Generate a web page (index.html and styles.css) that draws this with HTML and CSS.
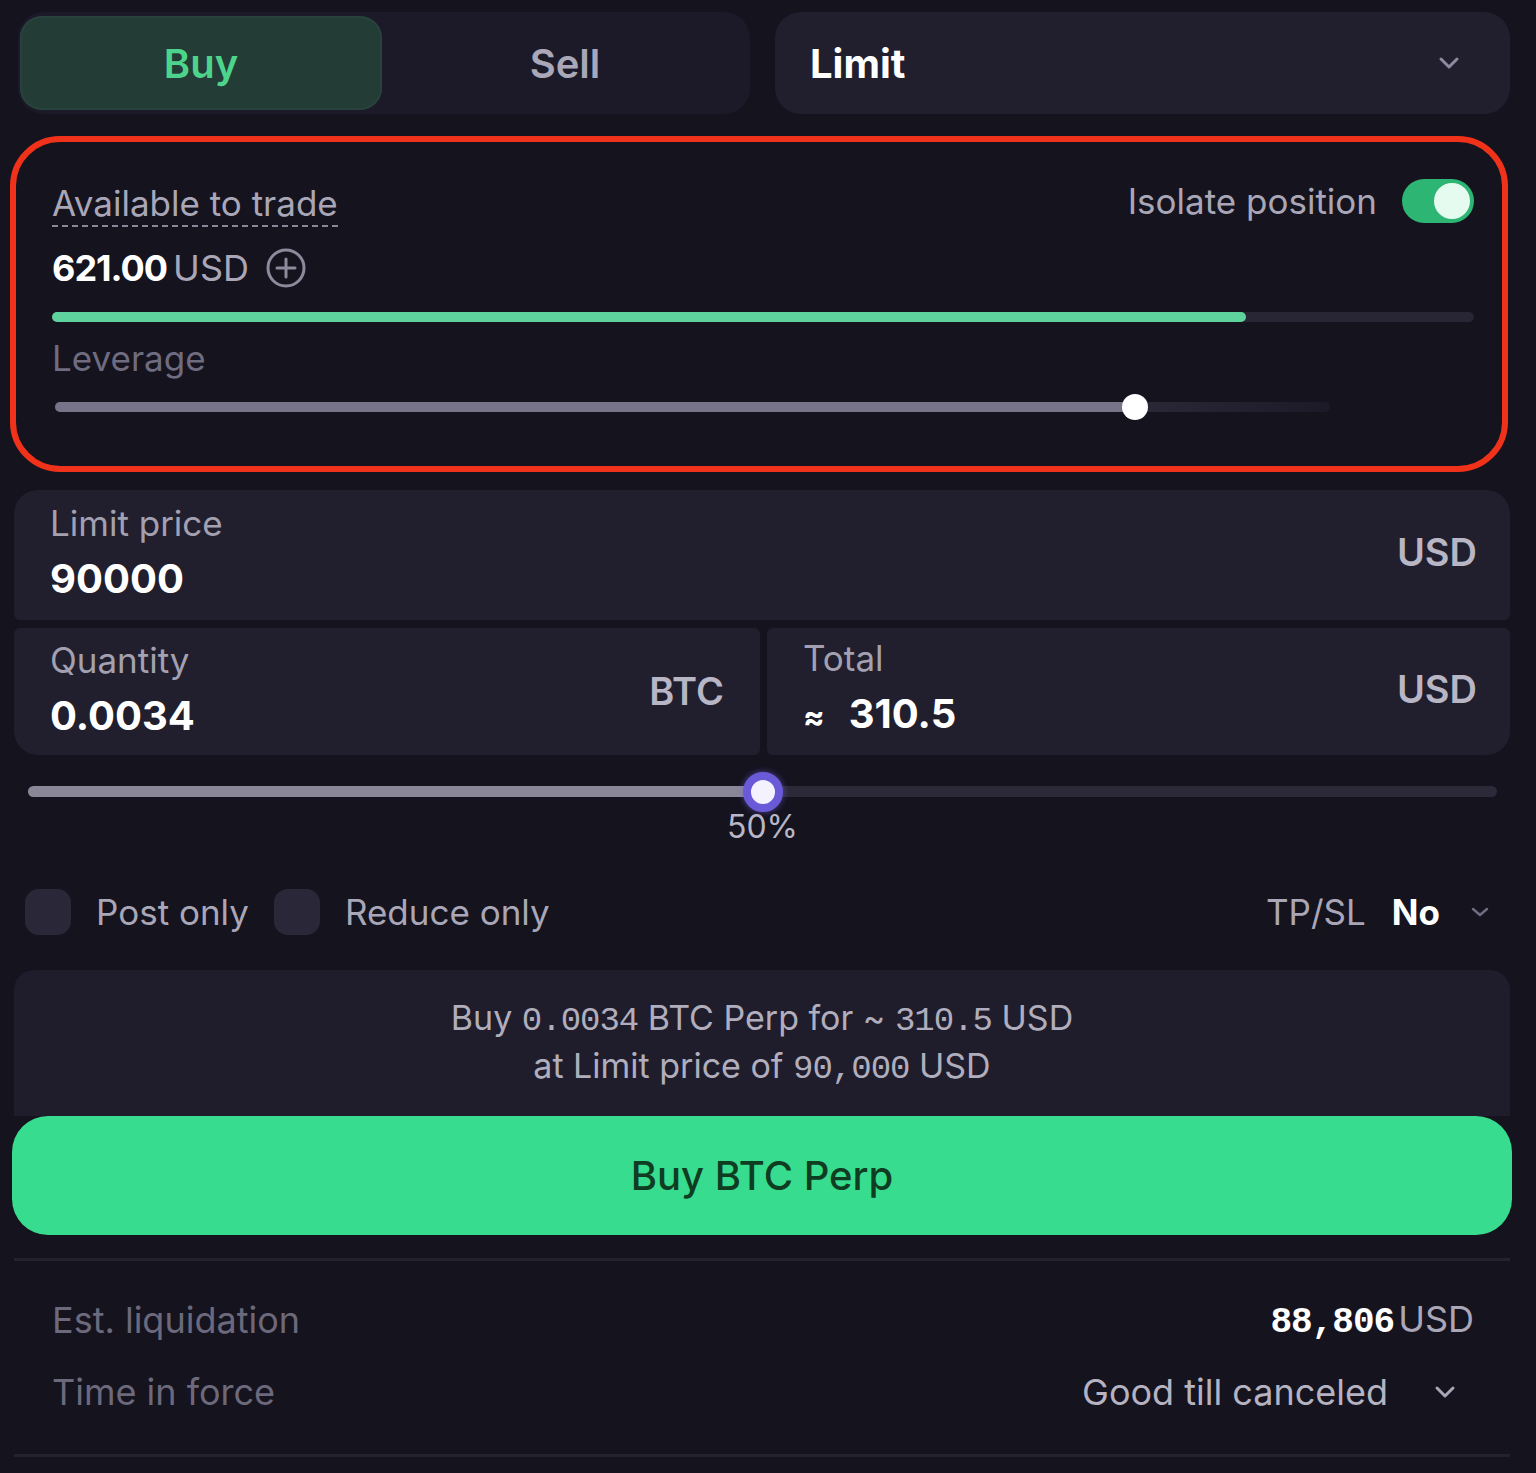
FILE: index.html
```html
<!DOCTYPE html>
<html lang="en">

<head>
    <meta charset="UTF-8">
    <meta name="viewport" content="width=device-width, initial-scale=1.0">
    <title>Buy BTC Perp</title>
    <link rel="stylesheet" href="styles.css">
</head>

<body>
    <main class="panel">
        <div class="top-row">
            <div class="side-switch">
                <button class="side-btn active">Buy</button>
                <button class="side-btn">Sell</button>
            </div>
            <div class="order-type">
                <span>Limit</span>
                <svg class="chevron" width="22" height="14" viewBox="0 0 22 14"><path d="M3 3l8 8 8-8" fill="none" stroke="#8e8ba0" stroke-width="3" stroke-linecap="round" stroke-linejoin="round"/></svg>
            </div>
        </div>

        <section class="account-box">
            <div class="account-head">
                <span class="dotted-label">Available to trade</span>
                <div class="isolate">
                    <span>Isolate position</span>
                    <span class="toggle"><span class="knob"></span></span>
                </div>
            </div>
            <div class="available">
                <strong>621.00</strong><span class="unit">USD</span>
                <svg class="plus-icon" width="42" height="42" viewBox="0 0 42 42"><circle cx="21" cy="21" r="18" fill="none" stroke="#8d8a9c" stroke-width="3"/><path d="M21 12v18M12 21h18" stroke="#8d8a9c" stroke-width="3" stroke-linecap="round"/></svg>
            </div>
            <div class="margin-bar"><div class="margin-fill" style="width: 84%"></div></div>
            <div class="leverage-label">Leverage</div>
            <div class="leverage-slider">
                <div class="leverage-fill" style="width: 84.7%"><span class="leverage-thumb"></span></div>
            </div>
        </section>

        <section class="inputs">
            <div class="field price-field">
                <div class="field-text">
                    <span class="field-label">Limit price</span>
                    <span class="field-value">90000</span>
                </div>
                <span class="field-unit">USD</span>
            </div>
            <div class="field-pair">
                <div class="field qty-field">
                    <div class="field-text">
                        <span class="field-label">Quantity</span>
                        <span class="field-value">0.0034</span>
                    </div>
                    <span class="field-unit">BTC</span>
                </div>
                <div class="field total-field">
                    <div class="field-text">
                        <span class="field-label">Total</span>
                        <span class="field-value"><span class="approx">≈</span>310.5</span>
                    </div>
                    <span class="field-unit">USD</span>
                </div>
            </div>
        </section>

        <div class="size-slider">
            <div class="size-track">
                <div class="size-fill" style="width: 50%"><span class="size-thumb"></span></div>
            </div>
            <div class="size-pct">50%</div>
        </div>

        <div class="options">
            <label class="check"><span class="box"></span>Post only</label>
            <label class="check"><span class="box"></span>Reduce only</label>
            <div class="tpsl">
                <span>TP/SL</span>
                <strong>No</strong>
                <svg width="20" height="12" viewBox="0 0 20 12"><path d="M3 3l7 6 7-6" fill="none" stroke="#6f6c80" stroke-width="2.5" stroke-linecap="round" stroke-linejoin="round"/></svg>
            </div>
        </div>

        <div class="summary">
            <p>Buy <span class="mono">0.0034</span> BTC Perp for ~ <span class="mono">310.5</span> USD</p>
            <p>at Limit price of <span class="mono">90,000</span> USD</p>
        </div>
        <button class="submit">Buy BTC Perp</button>

        <section class="details">
            <div class="detail-row">
                <span class="detail-label">Est. liquidation</span>
                <span class="detail-value"><strong class="mono">88,806</strong><span class="unit">USD</span></span>
            </div>
            <div class="detail-row">
                <span class="detail-label">Time in force</span>
                <span class="detail-value tif">Good till canceled
                    <svg width="26" height="16" viewBox="0 0 26 16"><path d="M5 4l8 8 8-8" fill="none" stroke="#a9a7b7" stroke-width="3" stroke-linecap="round" stroke-linejoin="round"/></svg>
                </span>
            </div>
        </section>
    </main>
</body>

</html>
```

FILE: styles.css
```css
* {
    box-sizing: border-box;
}

html, body {
    margin: 0;
    padding: 0;
    background-color: #15131e;
    font-family: Inter, 'Noto Sans', sans-serif;
    color: #a9a7b7;
}

.panel {
    width: 1500px;
    margin-left: 12px;
    padding-top: 12px;
}

/* top row */
.top-row {
    display: flex;
    gap: 25px;
    height: 102px;
    margin: 0 2px 0 6px;
}

.side-switch {
    width: 732px;
    display: flex;
    padding: 4px 2px;
    background-color: #1c1a28;
    border-radius: 26px;
}

.side-btn {
    flex: 1;
    border: none;
    background: none;
    font-family: inherit;
    font-size: 40px;
    font-weight: 600;
    color: #a9a7b8;
    border-radius: 22px;
}

.side-btn.active {
    flex: 0 0 362px;
    background-color: #233c36;
    color: #4dd48c;
    box-shadow: inset 0 0 0 2px #28423c;
}

.order-type {
    flex: 1;
    display: flex;
    align-items: center;
    justify-content: space-between;
    padding: 0 50px 0 35px;
    background-color: #211f2e;
    border-radius: 26px;
    color: #ffffff;
    font-size: 40px;
    font-weight: 700;
}

/* highlighted account box */
.account-box {
    margin: 22px 4px 0 -2px;
    border: 6px solid #f1321a;
    border-radius: 50px;
    padding: 39px 28px 54px 36px;
}

.account-head {
    display: flex;
    justify-content: space-between;
    align-items: center;
    height: 48px;
}

.dotted-label {
    font-size: 35px;
    line-height: 44px;
    color: #a9a7b7;
    border-bottom: 2px dashed #8a8799;
    align-self: flex-start;
}

.isolate {
    display: flex;
    align-items: center;
    gap: 25px;
    font-size: 35px;
    margin-top: -8px;
}

.toggle {
    width: 72px;
    height: 44px;
    border-radius: 22px;
    background-color: #2db673;
    display: flex;
    justify-content: flex-end;
    align-items: center;
    padding: 4px;
}

.knob {
    width: 36px;
    height: 36px;
    border-radius: 50%;
    background-color: #e6fbef;
}

.available {
    display: flex;
    align-items: center;
    margin-top: 17px;
    height: 44px;
    font-size: 36px;
}

.available strong {
    color: #ffffff;
    font-weight: 700;
    letter-spacing: -1px;
}

.unit {
    margin-left: 6px;
    color: #a9a7b7;
}

.plus-icon {
    margin-left: 16px;
}

.margin-bar {
    margin-top: 22px;
    height: 10px;
    border-radius: 5px;
    background-color: #282634;
}

.margin-fill {
    height: 100%;
    border-radius: 5px;
    background-color: #5fd39d;
}

.leverage-label {
    margin-top: 14px;
    font-size: 35px;
    line-height: 44px;
    color: #6f6c80;
}

.leverage-slider {
    margin: 22px 144px 0 3px;
    height: 10px;
    border-radius: 5px;
    background: linear-gradient(90deg, #2a2837 85%, #1c1a27 100%);
}

.leverage-fill {
    position: relative;
    height: 100%;
    border-radius: 5px;
    background-color: #77748a;
}

.leverage-thumb {
    position: absolute;
    right: -13px;
    top: -8px;
    width: 26px;
    height: 26px;
    border-radius: 50%;
    background-color: #ffffff;
}

/* inputs */
.inputs {
    margin: 18px 2px 0 2px;
}

.field {
    display: flex;
    justify-content: space-between;
    align-items: center;
    background-color: #211f2e;
    padding: 11px 33px 17px 36px;
}

.price-field {
    border-radius: 24px 24px 6px 6px;
    height: 130px;
}

.field-pair {
    display: flex;
    gap: 7px;
    margin-top: 8px;
}

.field-pair .field {
    flex: 1;
    height: 127px;
}

.qty-field {
    border-radius: 6px 6px 6px 24px;
    padding-right: 36px;
}

.total-field {
    border-radius: 6px 6px 24px 6px;
}

.field-text {
    display: flex;
    flex-direction: column;
    gap: 10px;
}

.field-label {
    font-size: 35px;
    line-height: 44px;
    color: #a3a1b1;
}

.field-value {
    font-size: 40px;
    line-height: 48px;
    font-weight: 700;
    color: #ffffff;
}

.approx {
    font-size: 32px;
    margin-right: 24px;
}

.field-unit {
    font-size: 38px;
    font-weight: 600;
    color: #b8b6c5;
    margin-top: 4px;
}

.total-field .field-unit,
.price-field .field-unit {
    margin-top: 0;
}

/* size slider */
.size-slider {
    margin: 31px 15px 0 16px;
}

.size-track {
    height: 11px;
    border-radius: 6px;
    background-color: #2c2a39;
}

.size-fill {
    position: relative;
    height: 100%;
    border-radius: 6px;
    background-color: #8a8798;
}

.size-thumb {
    position: absolute;
    right: -20px;
    top: -14px;
    width: 40px;
    height: 40px;
    border-radius: 50%;
    background-color: #f4f2ff;
    border: 8px solid #6a5ad8;
    box-shadow: 0 0 6px rgba(120, 100, 230, 0.6);
}

.size-pct {
    text-align: center;
    font-size: 32px;
    line-height: 36px;
    margin-top: 12px;
    color: #b9b7c6;
}

/* options */
.options {
    display: flex;
    align-items: center;
    margin: 44px 22px 0 13px;
    height: 46px;
    font-size: 35px;
}

.check {
    display: flex;
    align-items: center;
    margin-right: 25px;
    color: #a9a7b7;
}

.box {
    width: 46px;
    height: 46px;
    border-radius: 14px;
    background-color: #2a2838;
    margin-right: 25px;
}

.tpsl {
    margin-left: auto;
    display: flex;
    align-items: center;
    gap: 26px;
}

.tpsl strong {
    color: #ffffff;
    font-weight: 700;
    margin-right: 4px;
}

/* summary and submit */
.summary {
    margin: 35px 2px 0 2px;
    padding: 24px 0 26px;
    background-color: #1f1d2b;
    border-radius: 20px 20px 0 0;
    text-align: center;
    font-size: 34px;
    color: #b0aebd;
}

.summary p {
    margin: 0;
    height: 48px;
    line-height: 48px;
}

.mono {
    font-family: 'Liberation Mono', monospace;
    letter-spacing: -1px;
}

.submit {
    display: block;
    width: 100%;
    height: 119px;
    border: none;
    border-radius: 36px;
    background-color: #37dc8f;
    color: #0e3d22;
    font-family: inherit;
    font-size: 40px;
    font-weight: 500;
    cursor: pointer;
}

/* details */
.details {
    margin: 23px 2px 0 2px;
    border-top: 3px solid #24222f;
    border-bottom: 3px solid #24222f;
    padding: 37px 36px 40px 38px;
    display: flex;
    flex-direction: column;
    gap: 28px;
}

.detail-row {
    display: flex;
    justify-content: space-between;
    align-items: center;
    height: 44px;
    font-size: 36px;
}

.detail-label {
    color: #6c697c;
}

.detail-value strong {
    color: #ffffff;
    font-weight: 700;
}

.detail-value .unit {
    margin-left: 4px;
}

.tif {
    display: flex;
    align-items: center;
    gap: 44px;
    color: #b5b3c2;
    margin-right: 16px;
}
```
